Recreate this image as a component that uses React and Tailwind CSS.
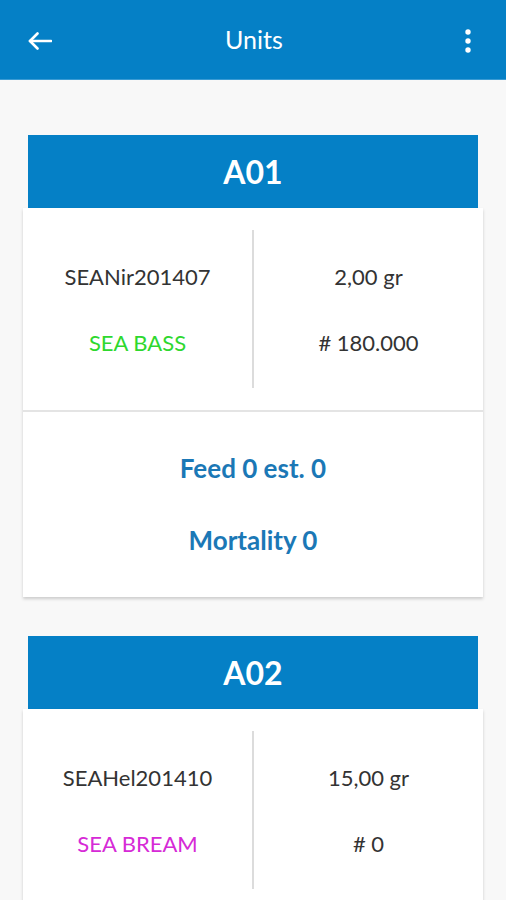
const units = [
  {
    code: "A01",
    batch: "SEANir201407",
    species: "SEA BASS",
    speciesColor: "text-[#2ed82e]",
    weight: "2,00 gr",
    count: "# 180.000",
    feed: "Feed 0 est. 0",
    mortality: "Mortality 0",
  },
  {
    code: "A02",
    batch: "SEAHel201410",
    species: "SEA BREAM",
    speciesColor: "text-[#d62ad6]",
    weight: "15,00 gr",
    count: "# 0",
    feed: "Feed 0 est. 0",
    mortality: "Mortality 0",
  },
];

const BackArrow = () => (
  <svg width="24" height="18" viewBox="0 0 24 18" fill="none" stroke="white" strokeWidth="2.6" strokeLinecap="round" strokeLinejoin="round">
    <path d="M23 9H2" />
    <path d="M9.5 1.5L2 9l7.5 7.5" />
  </svg>
);

const MoreDots = () => (
  <svg width="6" height="24" viewBox="0 0 6 24" fill="white">
    <circle cx="3" cy="3" r="2.7" />
    <circle cx="3" cy="12" r="2.7" />
    <circle cx="3" cy="21" r="2.7" />
  </svg>
);

const UnitCard = ({ unit }) => {
  return (
    <div className="mb-[39px]">
      {/* blue title bar */}
      <div className="mx-[5px] h-[73px] bg-[#0580c6] flex items-center justify-center">
        <span className="text-white font-bold text-[32px]">{unit.code}</span>
      </div>

      <div className="bg-white shadow-[0_2px_3px_rgba(0,0,0,0.18)]">
        <div className="flex h-[204px] border-b-2 border-[#e4e4e4]">
          <div className="flex-1 flex flex-col items-center justify-center gap-[33px] text-[22px]">
            <span className="text-[#333]">{unit.batch}</span>
            <span className={unit.speciesColor}>{unit.species}</span>
          </div>
          <div className="w-[2px] my-[22px] bg-[#dcdcdc]" />
          <div className="flex-1 flex flex-col items-center justify-center gap-[33px] text-[22px] text-[#333]">
            <span>{unit.weight}</span>
            <span>{unit.count}</span>
          </div>
        </div>
        <div className="h-[185px] flex flex-col items-center justify-center gap-[33px] text-[#1b78b6] font-bold text-[26px]">
          <span>{unit.feed}</span>
          <span>{unit.mortality}</span>
        </div>
      </div>
    </div>
  );
};

export default function App() {
  return (
    <div className="w-[506px] h-[900px] overflow-hidden bg-[#f8f8f8] font-['Lato',sans-serif]">
      <div className="h-[80px] bg-[#0580c6] border-b border-[#3a9bd4] flex items-center pl-[28px] pr-[35px] text-white">
        <button className="w-[60px] flex items-center pt-[2px]">
          <BackArrow />
        </button>
        <div className="flex-1 text-center text-[25px] pl-[9px]">Units</div>
        <button className="w-[60px] flex justify-end pt-[2px]">
          <MoreDots />
        </button>
      </div>

      <div className="px-[23px] pt-[55px]">
        {units.map((unit) => (
          <UnitCard key={unit.code} unit={unit} />
        ))}
      </div>
    </div>
  );
}
